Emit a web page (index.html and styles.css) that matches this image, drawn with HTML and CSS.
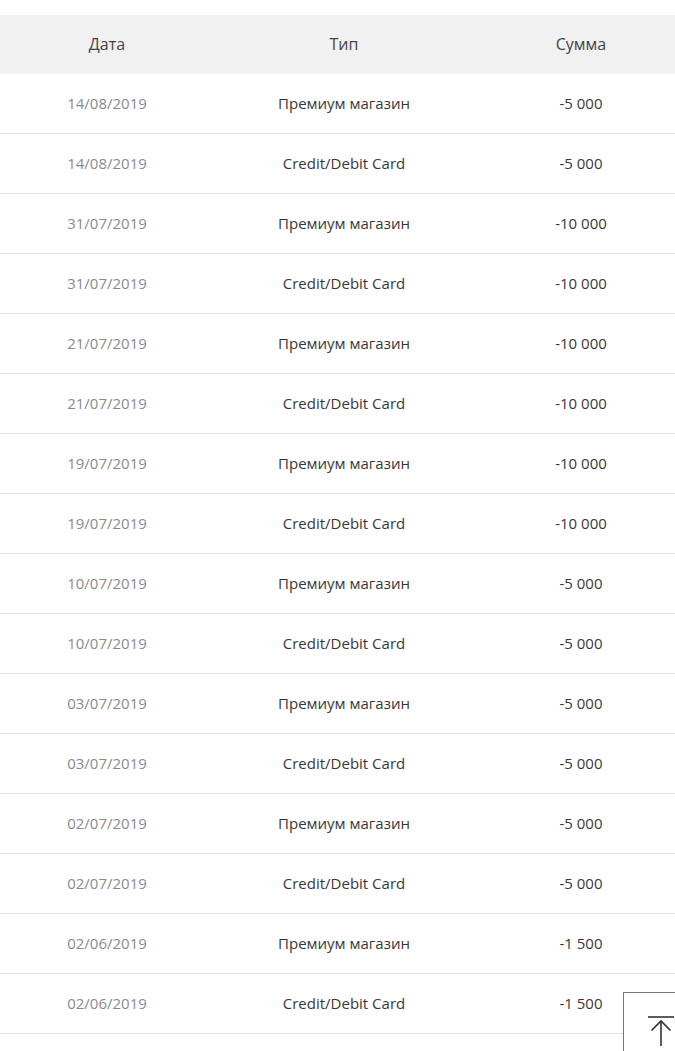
FILE: index.html
```html
<!DOCTYPE html>
<html lang="ru">
<head>
<meta charset="utf-8">
<link rel="stylesheet" href="styles.css">
</head>
<body>
<div class="page">
  <div class="table">
    <div class="row head">
      <div class="cell">Дата</div>
      <div class="cell">Тип</div>
      <div class="cell">Сумма</div>
    </div>
    <div class="row"><div class="cell date">14/08/2019</div><div class="cell">Премиум магазин</div><div class="cell">-5 000</div></div>
    <div class="row"><div class="cell date">14/08/2019</div><div class="cell">Credit/Debit Card</div><div class="cell">-5 000</div></div>
    <div class="row"><div class="cell date">31/07/2019</div><div class="cell">Премиум магазин</div><div class="cell">-10 000</div></div>
    <div class="row"><div class="cell date">31/07/2019</div><div class="cell">Credit/Debit Card</div><div class="cell">-10 000</div></div>
    <div class="row"><div class="cell date">21/07/2019</div><div class="cell">Премиум магазин</div><div class="cell">-10 000</div></div>
    <div class="row"><div class="cell date">21/07/2019</div><div class="cell">Credit/Debit Card</div><div class="cell">-10 000</div></div>
    <div class="row"><div class="cell date">19/07/2019</div><div class="cell">Премиум магазин</div><div class="cell">-10 000</div></div>
    <div class="row"><div class="cell date">19/07/2019</div><div class="cell">Credit/Debit Card</div><div class="cell">-10 000</div></div>
    <div class="row"><div class="cell date">10/07/2019</div><div class="cell">Премиум магазин</div><div class="cell">-5 000</div></div>
    <div class="row"><div class="cell date">10/07/2019</div><div class="cell">Credit/Debit Card</div><div class="cell">-5 000</div></div>
    <div class="row"><div class="cell date">03/07/2019</div><div class="cell">Премиум магазин</div><div class="cell">-5 000</div></div>
    <div class="row"><div class="cell date">03/07/2019</div><div class="cell">Credit/Debit Card</div><div class="cell">-5 000</div></div>
    <div class="row"><div class="cell date">02/07/2019</div><div class="cell">Премиум магазин</div><div class="cell">-5 000</div></div>
    <div class="row"><div class="cell date">02/07/2019</div><div class="cell">Credit/Debit Card</div><div class="cell">-5 000</div></div>
    <div class="row"><div class="cell date">02/06/2019</div><div class="cell">Премиум магазин</div><div class="cell">-1 500</div></div>
    <div class="row"><div class="cell date">02/06/2019</div><div class="cell">Credit/Debit Card</div><div class="cell">-1 500</div></div>
  </div>
</div>
<button class="to-top" aria-label="Наверх">
  <svg width="28" height="32" viewBox="0 0 28 32" fill="none" stroke="#333" stroke-width="1.6">
    <line x1="1" y1="2" x2="27" y2="2"/>
    <line x1="14" y1="6" x2="14" y2="31"/>
    <polyline points="4.5,15.5 14,6 23.5,15.5"/>
  </svg>
</button>
</body>
</html>
```

FILE: styles.css
```css
html, body {
  margin: 0;
  padding: 0;
  background: #fff;
  overflow: hidden;
}
body {
  font-family: "Open Sans", "Noto Sans", sans-serif;
  font-size: 15px;
  color: #383838;
}
.page {
  padding-top: 15px;
  width: 675px;
  overflow: hidden;
}
.table {
  width: 688px;
}
.row {
  display: grid;
  grid-template-columns: 214px 260px 214px;
  height: 60px;
  box-sizing: border-box;
  align-items: center;
  border-bottom: 1px solid #e2e2e2;
}
.row.head {
  background: #f1f1f1;
  height: 59px;
  border-bottom: none;
  color: #444;
  font-size: 16px;
}
.cell {
  text-align: center;
  padding-bottom: 2px;
}
.cell.date {
  color: #8a8a8a;
}
.to-top {
  position: fixed;
  left: 623px;
  top: 992px;
  width: 62px;
  height: 62px;
  background: #fff;
  border: 1px solid #777;
  margin: 0;
  display: flex;
  align-items: flex-start;
  justify-content: flex-start;
  padding: 22px 0 0 23px;
  box-sizing: border-box;
  cursor: pointer;
}
```
